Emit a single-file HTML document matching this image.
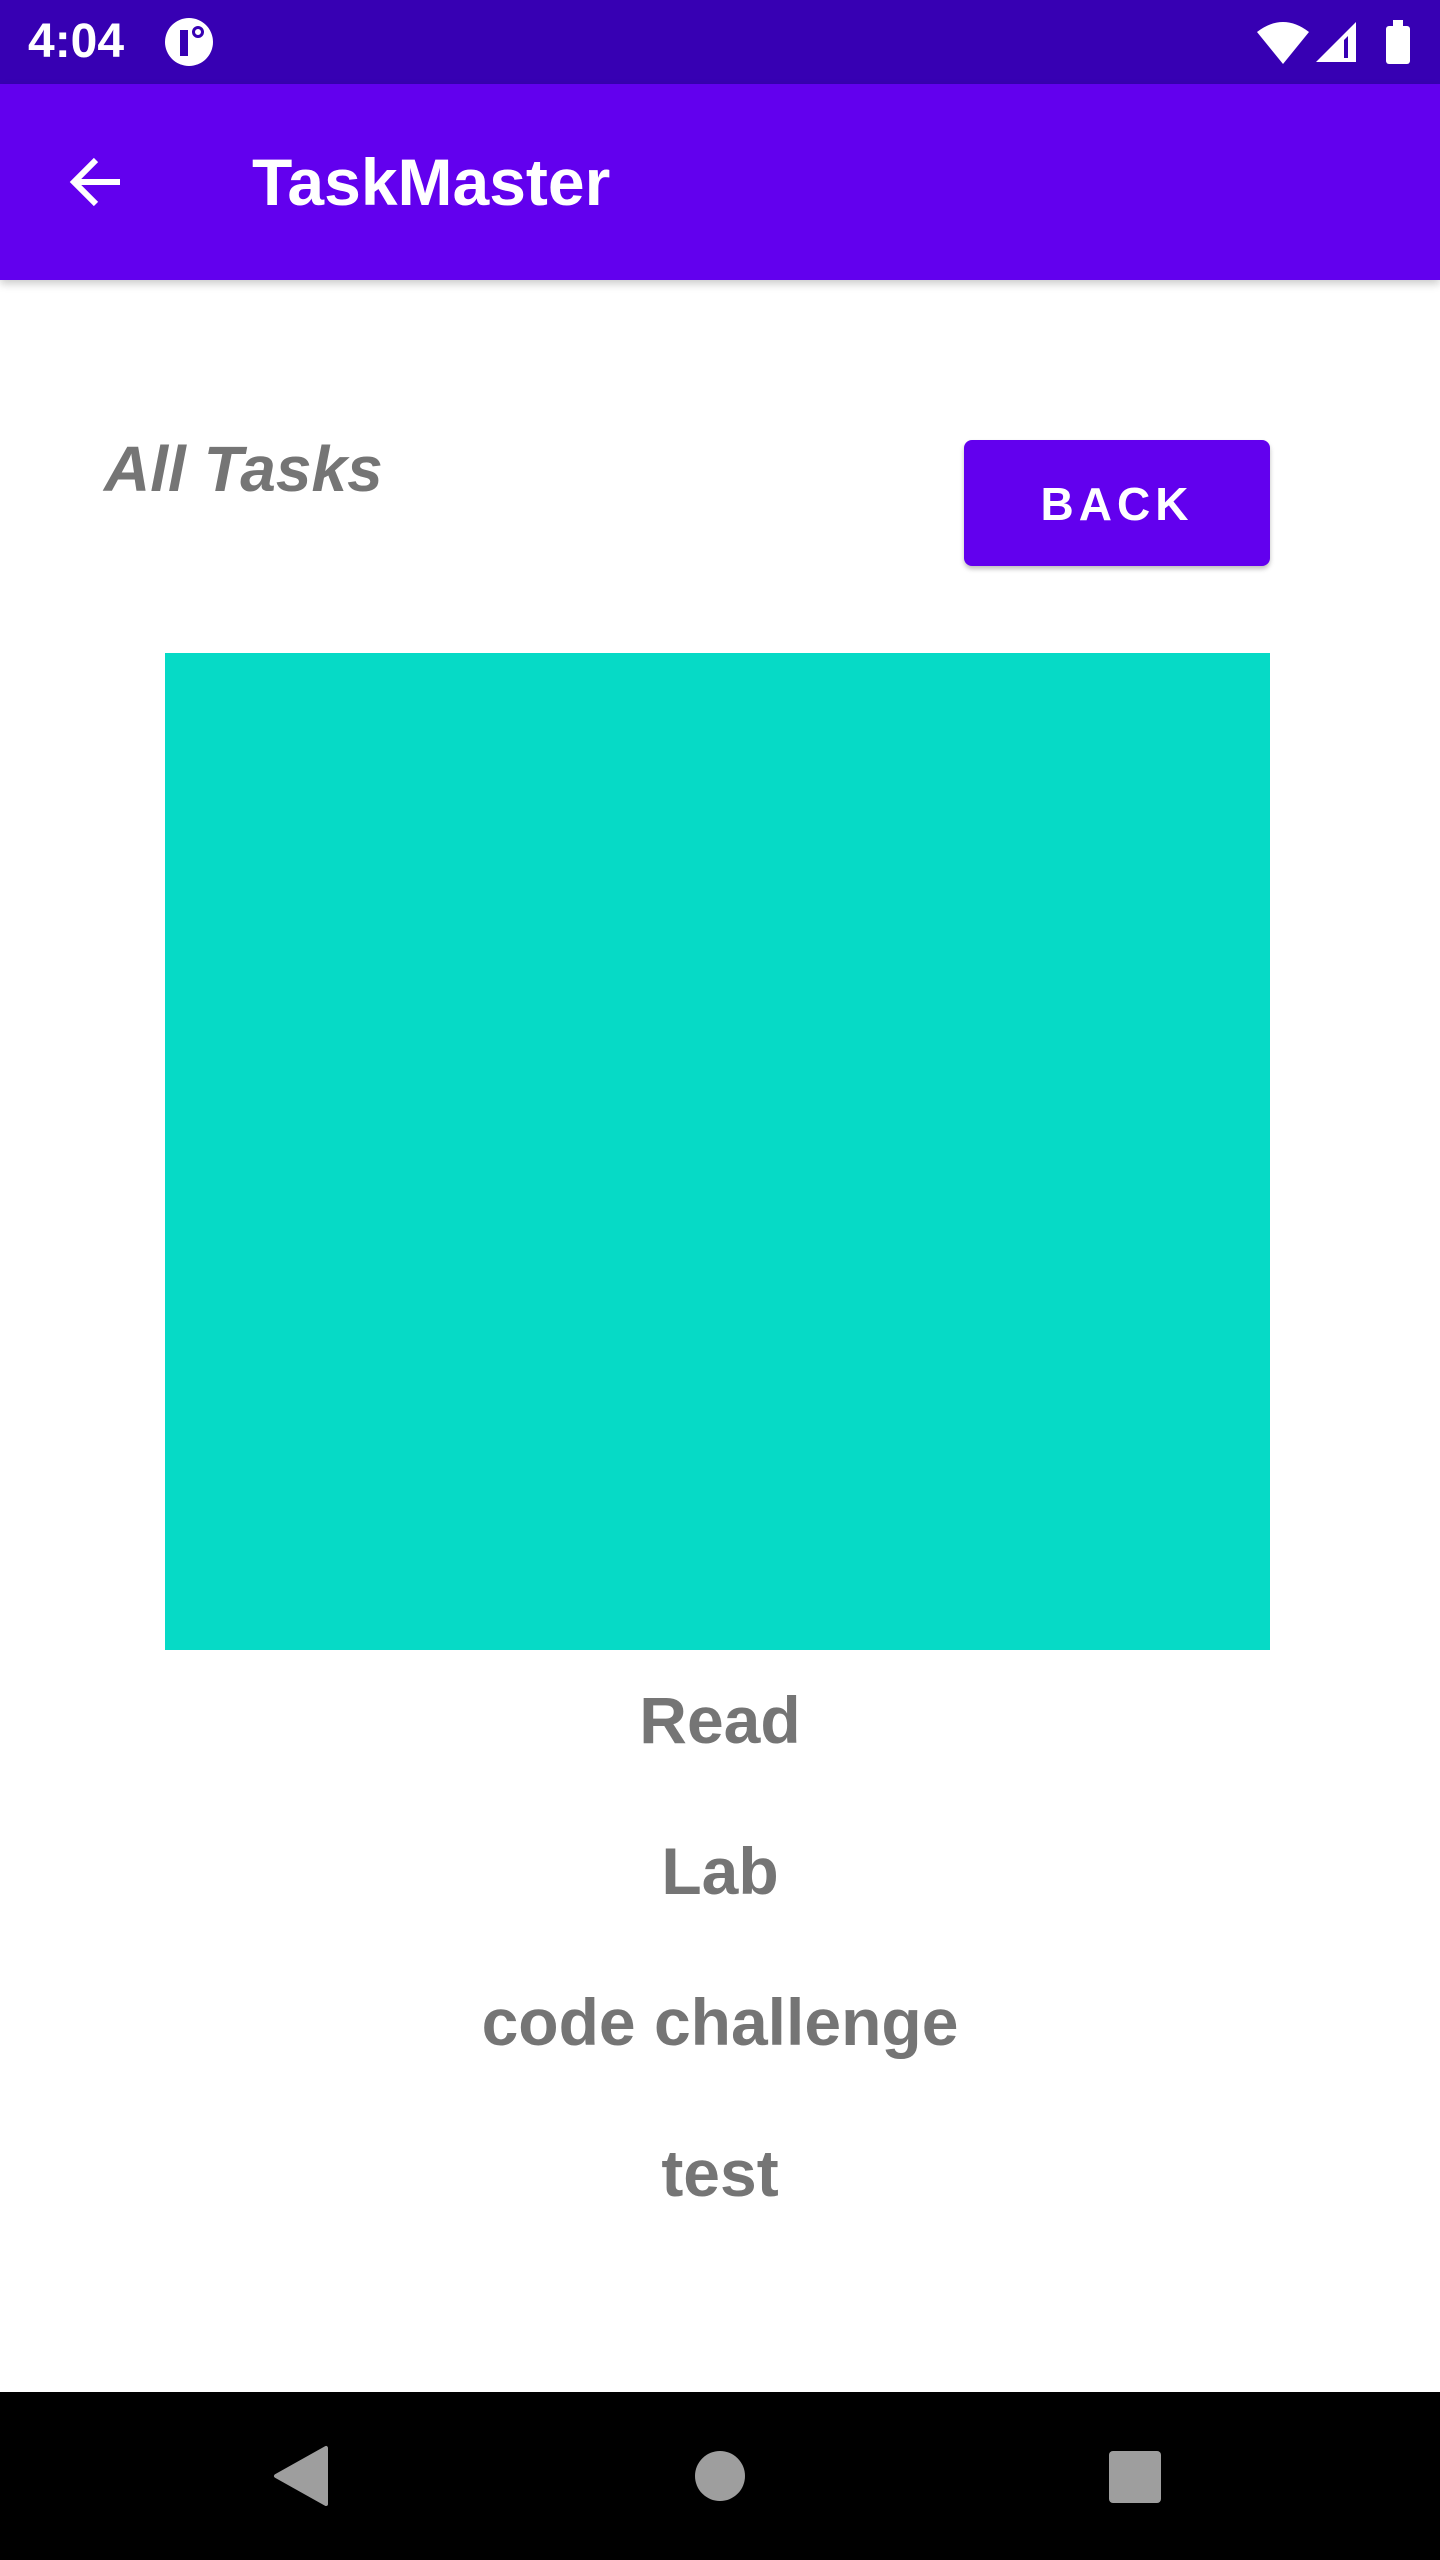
<!DOCTYPE html>
<html><head><meta charset="utf-8"><style>
*{margin:0;padding:0;box-sizing:border-box}
body{width:1440px;height:2560px;background:#fff;position:relative;font-family:"Liberation Sans",sans-serif;overflow:hidden}
.status{position:absolute;left:0;top:0;width:1440px;height:84px;background:#3700b3;color:#fff}
.appbar{position:absolute;left:0;top:84px;width:1440px;height:196px;background:#6200ee;box-shadow:0 4px 8px rgba(0,0,0,.2)}
.abs{position:absolute}
.item{position:absolute;left:0;width:1440px;text-align:center;color:#757575;font-weight:bold;font-size:66px}
</style></head><body>
<div class="status">
<div class="abs" style="left:28px;top:14px;font-size:48px;font-weight:bold">4:04</div>
<div class="abs" style="left:165px;top:18px;width:48px;height:48px;border-radius:50%;background:#fff"></div>
<div class="abs" style="left:180px;top:30px;width:8px;height:26px;background:#3700b3"></div>
<div class="abs" style="left:192px;top:26px;width:12px;height:12px;border-radius:50%;border:3px solid #3700b3"></div>
<svg class="abs" style="left:1255px;top:18px" width="56" height="48" viewBox="0 0 56 48"><path d="M2 14 Q28 -6 54 14 L28 46 Z" fill="#fff"/></svg>
<svg class="abs" style="left:1314px;top:20px" width="44" height="44" viewBox="0 0 44 44"><path d="M42 2 V42 H2 Z" fill="#fff"/><path d="M30 20 V38 H34 V16Z" fill="#3700b3"/></svg>
<div class="abs" style="left:1386px;top:26px;width:24px;height:38px;background:#fff;border-radius:3px"></div>
<div class="abs" style="left:1393px;top:20px;width:10px;height:8px;background:#fff"></div>
</div>
<div class="appbar">
<svg class="abs" style="left:66px;top:68px" width="60" height="60" viewBox="0 0 60 60"><path d="M54 30 H10 M30 8 L8 30 L30 52" stroke="#fff" stroke-width="6" fill="none"/></svg>
<div class="abs" style="left:252px;top:60px;font-size:66px;color:#fff;font-weight:bold">TaskMaster</div>
</div>
<div class="abs" style="left:104px;top:432px;font-size:64px;color:#757575;font-weight:bold;font-style:italic">All Tasks</div>
<div class="abs" style="left:964px;top:440px;width:306px;height:126px;background:#6200ee;border-radius:8px;box-shadow:0 3px 5px rgba(0,0,0,.25);color:#fff;font-size:46px;font-weight:bold;text-align:center;line-height:128px;letter-spacing:5px">BACK</div>
<div class="abs" style="left:165px;top:653px;width:1105px;height:997px;background:#06dac6"></div>
<div class="item" style="top:1682px">Read</div>
<div class="item" style="top:1833px">Lab</div>
<div class="item" style="top:1984px">code challenge</div>
<div class="item" style="top:2135px">test</div>
<div class="abs" style="left:0;top:2392px;width:1440px;height:168px;background:#000"></div>
<svg class="abs" style="left:270px;top:2444px" width="60" height="64" viewBox="0 0 60 64"><path d="M56 4 V60 L6 32 Z" fill="#9e9e9e" stroke="#9e9e9e" stroke-width="4" stroke-linejoin="round"/></svg>
<div class="abs" style="left:695px;top:2451px;width:50px;height:50px;border-radius:50%;background:#9e9e9e"></div>
<div class="abs" style="left:1109px;top:2451px;width:52px;height:52px;border-radius:4px;background:#9e9e9e"></div>
</body></html>
